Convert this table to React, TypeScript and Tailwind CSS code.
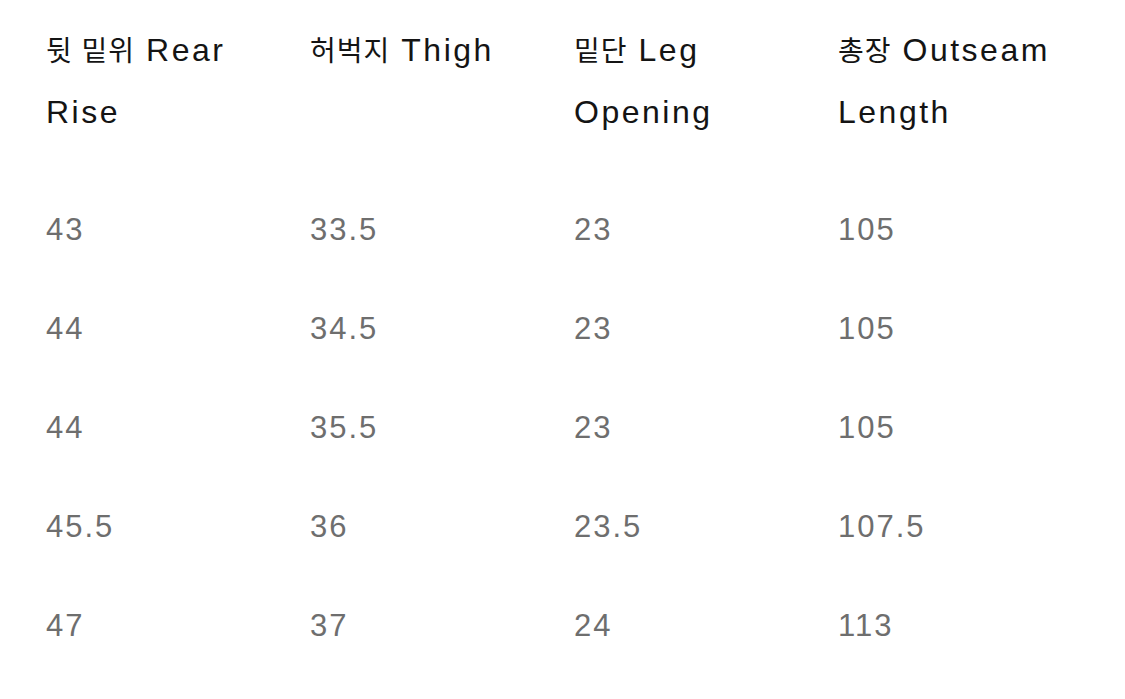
const headers = [
  { ko: "뒷 밑위", en: "Rear Rise" },
  { ko: "허벅지", en: "Thigh" },
  { ko: "밑단", en: "Leg Opening" },
  { ko: "총장", en: "Outseam Length" },
];

const rows = [
  ["43", "33.5", "23", "105"],
  ["44", "34.5", "23", "105"],
  ["44", "35.5", "23", "105"],
  ["45.5", "36", "23.5", "107.5"],
  ["47", "37", "24", "113"],
];

export default function App() {
  return (
    <div
      className="min-h-screen w-full bg-white pl-[46px] pt-[19px]"
      style={{ fontFamily: '"Liberation Sans", "Noto Sans CJK KR", sans-serif' }}
    >
      <div className="grid grid-cols-[264px_264px_264px_264px] pb-[38px]">
        {headers.map((h) => (
          <div
            key={h.en}
            className="w-[236px] text-[32px] leading-[62px] tracking-[2.5px] text-[#141414]"
          >
            <span className="mr-[11px] inline-block align-baseline text-[28px] leading-[40px] tracking-[1px]">
              {h.ko}
            </span>
            <span>{h.en}</span>
          </div>
        ))}
      </div>
      {rows.map((row, i) => (
        <div key={i} className="grid h-[99px] grid-cols-[264px_264px_264px_264px] items-center">
          {row.map((v, j) => (
            <div key={j} className="text-[31px] tracking-[2px] text-[#6e6e6e]">
              {v}
            </div>
          ))}
        </div>
      ))}
    </div>
  );
}
